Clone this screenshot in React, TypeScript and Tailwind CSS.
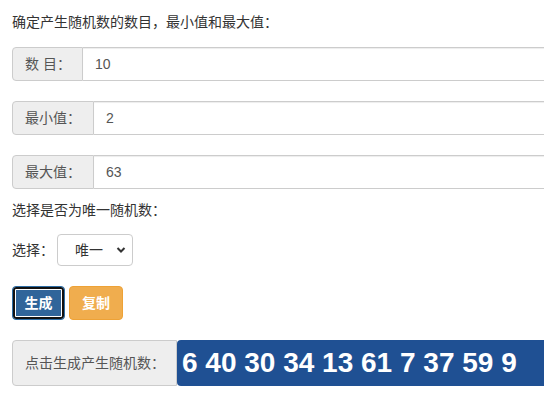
import React from "react";

const fields = [
  { label: "数 目：", value: "10", width: "w-[71px]" },
  { label: "最小值：", value: "2", width: "w-[82px]" },
  { label: "最大值：", value: "63", width: "w-[82px]" },
];

function InputGroup({ label, value, width }: { label: string; value: string; width: string }) {
  return (
    <div className="flex h-[34px] w-[720px] mb-5">
      <div
        className={`${width} shrink-0 flex items-center px-3 whitespace-nowrap bg-[#eeeeee] text-[#555] border border-[#cccccc] rounded-l-[4px]`}
      >
        {label}
      </div>
      <div className="flex-1 flex items-center px-3 text-[#555] bg-white border border-l-0 border-[#cccccc] rounded-r-[4px] shadow-[inset_0_1px_1px_rgba(0,0,0,0.075)]">
        {value}
      </div>
    </div>
  );
}

export default function App() {
  return (
    <div
      className="w-[544px] h-[394px] overflow-hidden bg-white p-3 text-[14px] leading-5 text-[#333]"
      style={{ fontFamily: '"Liberation Sans", "Noto Sans CJK SC", sans-serif' }}
    >
      <p>确定产生随机数的数目，最小值和最大值：</p>

      <div className="mt-[15px]">
        {fields.map((f) => (
          <InputGroup key={f.label} {...f} />
        ))}
      </div>

      <p className="-mt-[9px]">选择是否为唯一随机数：</p>

      <div className="flex items-center gap-[3px] mt-[14px]">
        <span className="whitespace-nowrap">选择：</span>
        <div className="w-[76px] h-[32px] flex items-center justify-between pl-[17px] pr-[6px] border border-[#cccccc] rounded-[4px] bg-white text-[#333]">
          <span>唯一</span>
          <svg width="10" height="8" viewBox="0 0 10 8" className="text-[#333]">
            <path d="M1.5 2 L5 5.5 L8.5 2" fill="none" stroke="currentColor" strokeWidth="2" />
          </svg>
        </div>
      </div>

      <div className="flex gap-1 mt-5">
        <button className="w-[53px] h-[34px] rounded-[4px] bg-[#30659a] border border-[#2e6da4] text-white text-[14px] font-bold shadow-[inset_0_0_0_2px_#111,inset_0_0_0_3px_#fff]">
          生成
        </button>
        <button className="w-[54px] h-[34px] rounded-[4px] bg-[#f0ad4e] border border-[#eea236] text-white text-[14px] font-bold">
          复制
        </button>
      </div>

      <div className="flex h-[46px] w-[720px] mt-5">
        <div className="w-[165px] shrink-0 flex items-center px-3 whitespace-nowrap bg-[#eeeeee] text-[#555] border border-[#cccccc] rounded-l-[4px]">
          点击生成产生随机数：
        </div>
        <div className="flex-1 flex items-center pl-[5px] bg-[#1f5093] text-white font-bold text-[28px] whitespace-nowrap rounded-[4px]">
          6 40 30 34 13 61 7 37 59 9
        </div>
      </div>
    </div>
  );
}
